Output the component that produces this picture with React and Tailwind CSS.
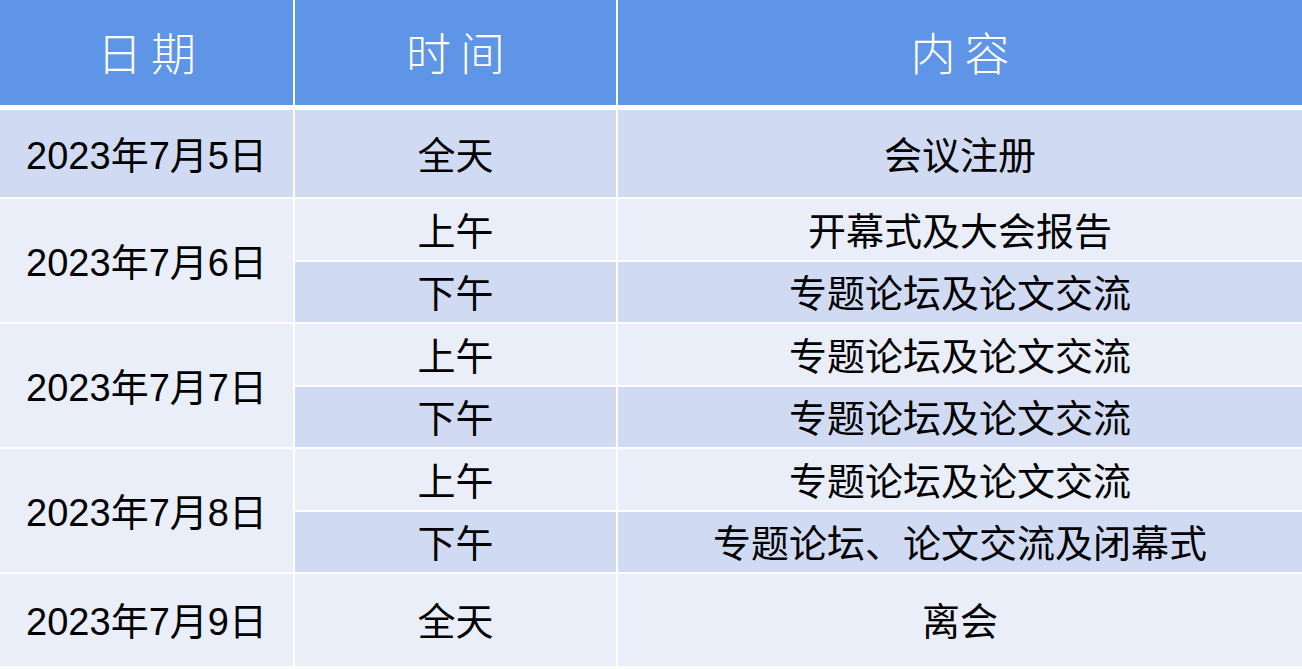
import React from "react";

const DARK = "bg-[#d0dbf3]";
const LIGHT = "bg-[#e9eef9]";

function Cell({ children, className = "" }) {
  return (
    <div className={`flex items-center justify-center text-[38px] text-black leading-none pt-[4px] ${className}`}>
      {children}
    </div>
  );
}

export default function App() {
  const font = { fontFamily: '"Liberation Sans", "Noto Sans CJK SC", sans-serif' };
  return (
    <div className="w-[1302px] h-[669px] bg-white overflow-hidden" style={font}>
      <div className="grid grid-cols-[293px_321px_684px] gap-x-[2px] h-[105px]">
        {["日期", "时间", "内容"].map((t) => (
          <div
            key={t}
            className="bg-[#5e95e6] flex items-center justify-center text-white text-[45px] font-light tracking-[9px] pl-[9px] pb-[2px]"
            style={{ fontFamily: '"Noto Sans CJK SC", serif' }}
          >
            {t}
          </div>
        ))}
      </div>
      <div className="mt-[5px] grid grid-cols-[293px_321px_684px] grid-rows-[87px_61px_60px_61px_60px_61px_60px_92px] gap-[2px]">
        <Cell className={DARK}>2023年7月5日</Cell>
        <Cell className={DARK}>全天</Cell>
        <Cell className={DARK}>会议注册</Cell>

        <Cell className={`${LIGHT} row-span-2`}>2023年7月6日</Cell>
        <Cell className={LIGHT}>上午</Cell>
        <Cell className={LIGHT}>开幕式及大会报告</Cell>
        <Cell className={DARK}>下午</Cell>
        <Cell className={DARK}>专题论坛及论文交流</Cell>

        <Cell className={`${LIGHT} row-span-2`}>2023年7月7日</Cell>
        <Cell className={LIGHT}>上午</Cell>
        <Cell className={LIGHT}>专题论坛及论文交流</Cell>
        <Cell className={DARK}>下午</Cell>
        <Cell className={DARK}>专题论坛及论文交流</Cell>

        <Cell className={`${LIGHT} row-span-2`}>2023年7月8日</Cell>
        <Cell className={LIGHT}>上午</Cell>
        <Cell className={LIGHT}>专题论坛及论文交流</Cell>
        <Cell className={DARK}>下午</Cell>
        <Cell className={DARK}>专题论坛、论文交流及闭幕式</Cell>

        <Cell className={LIGHT}>2023年7月9日</Cell>
        <Cell className={LIGHT}>全天</Cell>
        <Cell className={LIGHT}>离会</Cell>
      </div>
    </div>
  );
}
